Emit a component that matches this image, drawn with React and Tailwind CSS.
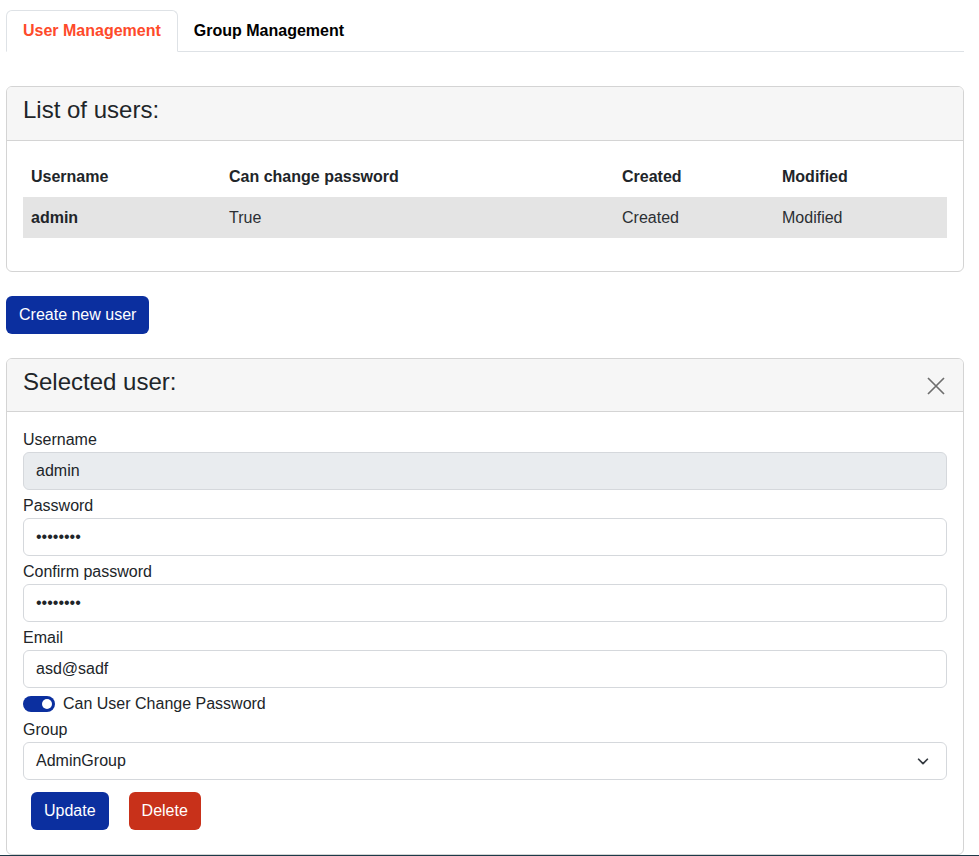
import React from "react";

function Field({ label, children }) {
  return (
    <div className="mt-1 first:mt-0">
      <label className="block leading-6">{label}</label>
      {children}
    </div>
  );
}

export default function App() {
  const font = { fontFamily: '"Liberation Sans", Arial, sans-serif' };
  return (
    <div style={font} className="text-[16px] text-[#212529] bg-white">
      <div className="pl-[6px] pr-[15px] pt-[10px]">
        {/* Tabs */}
        <div className="flex border-b border-[#dee2e6]">
          <div className="-mb-px px-4 h-[42px] flex items-center rounded-t-[6px] border border-[#dee2e6] border-b-white bg-white font-bold text-[#fe4a2a]">
            User Management
          </div>
          <div className="px-4 h-[41px] flex items-center font-bold text-black">
            Group Management
          </div>
        </div>

        {/* List of users card */}
        <div className="mt-[34px] border border-[#d4d4d4] rounded-[6px] overflow-hidden">
          <div className="bg-[#f6f6f6] border-b border-[#d4d4d4] px-4 pt-2 h-[54px]">
            <h4 className="text-[24px] leading-[29px]">List of users:</h4>
          </div>
          <div className="px-4 pt-4 pb-[17px]">
            <table className="w-full border-collapse mb-4 table-fixed">
              <colgroup>
                <col className="w-[198px]" />
                <col className="w-[393px]" />
                <col className="w-[160px]" />
                <col />
              </colgroup>
              <thead>
                <tr className="font-bold text-left">
                  <th className="px-2 h-[40px] font-bold">Username</th>
                  <th className="px-2 font-bold">Can change password</th>
                  <th className="px-2 font-bold">Created</th>
                  <th className="px-2 font-bold">Modified</th>
                </tr>
              </thead>
              <tbody>
                <tr className="bg-[#e4e4e4] text-[#2b2f33]">
                  <td className="px-2 h-[41px] font-bold text-[#212529]">admin</td>
                  <td className="px-2">True</td>
                  <td className="px-2">Created</td>
                  <td className="px-2">Modified</td>
                </tr>
              </tbody>
            </table>
          </div>
        </div>

        <button className="mt-[24px] h-[38px] px-[13px] rounded-[6px] bg-[#0b2f9f] text-white leading-6">
          Create new user
        </button>

        {/* Selected user card */}
        <div className="mt-[24px] border border-[#d4d4d4] rounded-[6px] overflow-hidden">
          <div className="bg-[#f6f6f6] border-b border-[#d4d4d4] px-4 pt-2 h-[53px] flex justify-between">
            <h4 className="text-[24px] leading-[29px]">Selected user:</h4>
            <svg width="18" height="18" viewBox="0 0 18 18" className="mt-[10px] mr-[2px]" fill="none" stroke="#6e6e6e" strokeWidth="1.7">
              <path d="M1 1L17 17M17 1L1 17" />
            </svg>
          </div>
          <div className="px-4 pt-4 pb-4">
            <Field label="Username">
              <div className="h-[38px] px-3 flex items-center rounded-[6px] border border-[#d5d8dc] bg-[#e9ecef]">admin</div>
            </Field>
            <Field label="Password">
              <div className="h-[38px] px-3 flex items-center rounded-[6px] border border-[#d5d8dc] bg-white">••••••••</div>
            </Field>
            <Field label="Confirm password">
              <div className="h-[38px] px-3 flex items-center rounded-[6px] border border-[#d5d8dc] bg-white">••••••••</div>
            </Field>
            <Field label="Email">
              <div className="h-[38px] px-3 flex items-center rounded-[6px] border border-[#d5d8dc] bg-white">asd@sadf</div>
            </Field>
            <div className="mt-[4px] flex items-center h-6">
              <div className="w-[32px] h-[16px] rounded-full bg-[#0b2f9f] flex items-center justify-end pr-[3px]">
                <div className="w-[10px] h-[10px] rounded-full bg-white" />
              </div>
              <span className="ml-2">Can User Change Password</span>
            </div>
            <div className="mt-[2px]">
              <label className="block leading-6">Group</label>
              <div className="h-[38px] pl-3 pr-[16px] flex items-center justify-between rounded-[6px] border border-[#d5d8dc] bg-white">
                <span>AdminGroup</span>
                <svg width="14" height="14" viewBox="0 0 16 16" fill="none" stroke="#343a40" strokeWidth="2" strokeLinecap="round" strokeLinejoin="round">
                  <path d="M3 6l5 5 5-5" />
                </svg>
              </div>
            </div>
            <div className="mt-[12px] ml-2 mb-2 flex gap-[20px]">
              <button className="h-[38px] px-[13px] rounded-[6px] bg-[#0b2f9f] text-white leading-6">Update</button>
              <button className="h-[38px] px-[13px] rounded-[6px] bg-[#c8311a] text-white leading-6">Delete</button>
            </div>
          </div>
        </div>
      </div>
      <div className="h-10 bg-[#1d3a48]" />
    </div>
  );
}
